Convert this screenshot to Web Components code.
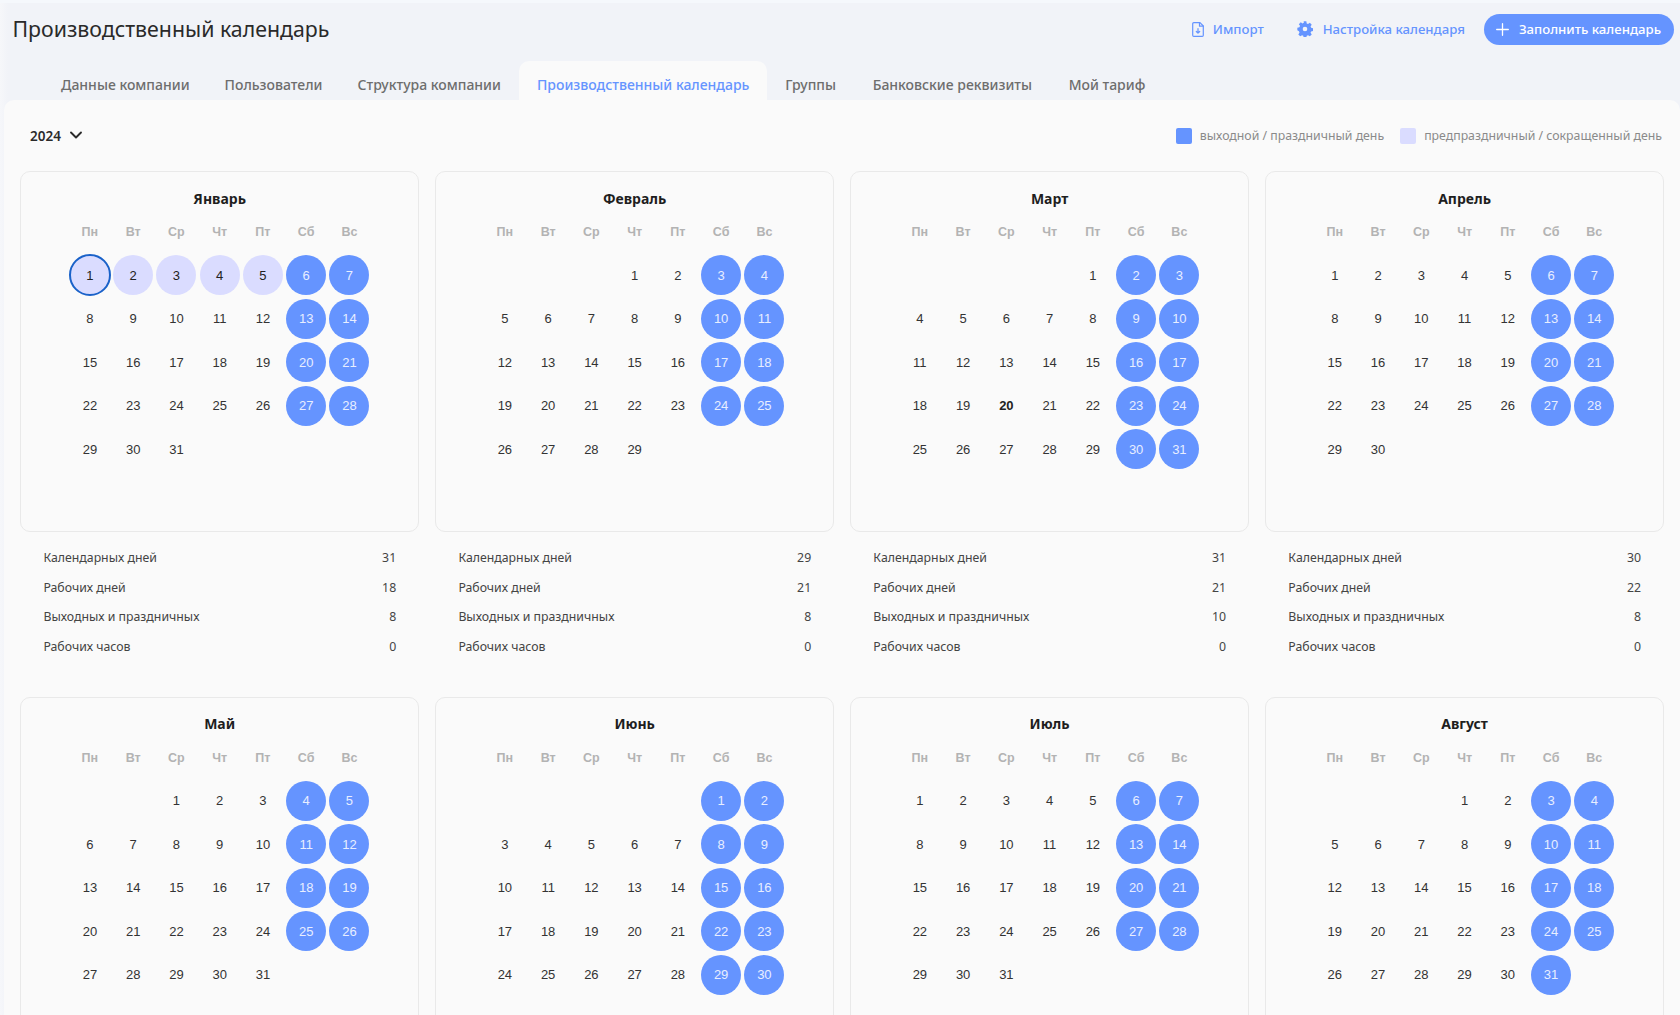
<!DOCTYPE html>
<html lang="ru"><head><meta charset="utf-8"><title>Производственный календарь</title>
<style>html,body{margin:0;padding:0;height:1015px;overflow:hidden;background:#f1f3f8;font-family:"Noto Sans","Liberation Sans",sans-serif}</style></head>
<body><calendar-app></calendar-app>
<script>
const MONTHS=[
 {n:'Январь',o:0,d:31,s:[31,18,8,0],light:[1,2,3,4,5],ring:1},
 {n:'Февраль',o:3,d:29,s:[29,21,8,0]},
 {n:'Март',o:4,d:31,s:[31,21,10,0],bold:20},
 {n:'Апрель',o:0,d:30,s:[30,22,8,0]},
 {n:'Май',o:2,d:31},
 {n:'Июнь',o:5,d:30},
 {n:'Июль',o:0,d:31},
 {n:'Август',o:3,d:31}];
const WD=['Пн','Вт','Ср','Чт','Пт','Сб','Вс'];
const LABELS=['Календарных дней','Рабочих дней','Выходных и праздничных','Рабочих часов'];

class ActionLink extends HTMLElement{constructor(){super();this.attachShadow({mode:'open'}).innerHTML=`<style>
:host{display:inline-flex;align-items:center;gap:var(--g,9px);color:#6594ff;font:500 13.2px "Noto Sans",sans-serif;white-space:nowrap}
::slotted(svg){display:block}</style><slot name="icon"></slot><slot></slot>`}}
customElements.define('action-link',ActionLink);

class FillButton extends HTMLElement{constructor(){super();this.attachShadow({mode:'open'}).innerHTML=`<style>
:host{display:inline-flex;align-items:center;gap:10px;height:31px;padding:0 13px 0 12px;border-radius:16px;background:#6594ff;color:#fff;font:500 13.2px "Noto Sans",sans-serif;white-space:nowrap}
svg{display:block}</style><svg width="13" height="13" viewBox="0 0 13 13"><path d="M6.500 .7v11.600M.7 6.500h11.600" stroke="#fff" stroke-width="1.300" stroke-linecap="round"/></svg><slot></slot>`}}
customElements.define('fill-button',FillButton);

class TopBar extends HTMLElement{constructor(){super();this.attachShadow({mode:'open'}).innerHTML=`<style>
:host{display:flex;align-items:center;height:61px;padding:0 6px 2px 12.500px;box-sizing:border-box;font-family:"Noto Sans",sans-serif;border-top:3px solid #f5f8fc}
h1{margin:0;flex:1;font:400 21.3px "Noto Sans",sans-serif;color:#2a2a2a;position:relative;top:-3px}
.a{display:flex;align-items:center;position:relative;top:-2px}
action-link:nth-child(1){margin-right:33px}
action-link:nth-child(2){margin-right:19px;--g:10px}
</style><h1>Производственный календарь</h1><div class="a">
<action-link><svg slot="icon" width="12" height="15" viewBox="0 0 12 15" fill="none" stroke="#6594ff" stroke-width="1.200" stroke-linejoin="round" stroke-linecap="round"><path d="M.7 1.800C.7 1.200 1.200.7 1.800.7H8l3.300 3.300v9.200c0 .6-.5 1.100-1.100 1.100H1.800c-.6 0-1.100-.5-1.100-1.100z"/><path d="M7.500.7v3.500h3.800M6 6.500v4.500M4.300 9.500L6 11.200l1.700-1.700"/></svg>Импорт</action-link>
<action-link><svg slot="icon" width="16" height="16" viewBox="0 0 24 24" fill="#6594ff"><path fill-rule="evenodd" d="M10 .5h4l.6 3.200c.7.200 1.300.500 1.900.9l2.800-1.800 2.800 2.800-1.800 2.800c.4.600.7 1.200.9 1.900l3.300.7v4l-3.300.6c-.2.600-.5 1.200-.9 1.800l1.800 2.800-2.800 2.800-2.800-1.800c-.6.400-1.200.6-1.900.8l-.6 3.300h-4l-.6-3.300c-.6-.2-1.200-.4-1.800-.8l-2.800 1.800-2.800-2.800 1.800-2.800c-.4-.6-.6-1.200-.8-1.900L.5 14v-4l3.200-.6c.2-.7.500-1.300.9-1.900L2.800 4.700 5.600 1.900l2.800 1.800c.6-.4 1.200-.7 1.900-.9zM12 8.500a3.500 3.500 0 1 0 0 7 3.500 3.500 0 0 0 0-7z"/></svg>Настройка календаря</action-link>
<fill-button>Заполнить календарь</fill-button></div>`}}
customElements.define('top-bar',TopBar);

class TabBar extends HTMLElement{constructor(){super();const t=['Данные компании','Пользователи','Структура компании','Производственный календарь','Группы','Банковские реквизиты','Мой тариф'];
this.attachShadow({mode:'open'}).innerHTML=`<style>
:host{display:flex;height:39px;padding-left:43.500px;font:500 14px "Noto Sans",sans-serif;color:#6d6d6d}
div{display:flex;align-items:center;padding:7px 17.500px 0;white-space:nowrap;box-sizing:border-box}
div:first-child{padding-right:16.700px}
.on{background:#fafafa;color:#6594ff;border-radius:10px 10px 0 0;margin-left:1px}
.on~div{padding-left:18.300px;padding-right:18.300px}
</style>`+t.map((x,i)=>`<div class="${i==3?'on':''}">${x}</div>`).join('')}}
customElements.define('tab-bar',TabBar);

class PanelToolbar extends HTMLElement{constructor(){super();this.attachShadow({mode:'open'}).innerHTML=`<style>
:host{display:flex;align-items:center;justify-content:space-between;height:71px;padding:0 18px 0 26px;box-sizing:border-box;font-family:"Noto Sans",sans-serif}
.y{display:flex;align-items:center;gap:8px;font:600 13.500px "Noto Sans",sans-serif;color:#2a2a2a}
.l{display:flex;align-items:center;font-size:12.300px;color:#8a8a8a}
i{width:16px;height:16px;border-radius:2px;margin-right:8px;background:#6594ff}
i.b{background:#dadcff;margin-left:16px}
</style><div class="y">2024<svg width="14" height="9" viewBox="0 0 14 9" fill="none" stroke="#2a2a2a" stroke-width="1.900" stroke-linecap="round" stroke-linejoin="round"><path d="M2 1.500l5 5 5-5"/></svg></div>
<div class="l"><i></i>выходной / праздничный день<i class="b"></i>предпраздничный / сокращенный день</div>`}}
customElements.define('panel-toolbar',PanelToolbar);

class DayCell extends HTMLElement{constructor(){super();this.attachShadow({mode:'open'}).innerHTML=`<style>
:host{display:flex;align-items:center;justify-content:center;height:43.400px;font:400 13px "Liberation Sans",sans-serif;color:#333}
span{width:40px;height:40px;border-radius:50%;display:flex;align-items:center;justify-content:center;box-sizing:border-box}
:host([kind=off]) span{background:#6594ff;color:#e8eeff}
:host([kind=light]) span{background:#dadcff;color:#222}
:host([ring]) span{border:2px solid #1a62c9;width:42px;height:42px;margin:-1px}
:host([bold]){font-weight:700;color:#222}
</style><span><slot></slot></span>`}}
customElements.define('day-cell',DayCell);

class MonthCard extends HTMLElement{constructor(){super();this.attachShadow({mode:'open'})}
connectedCallback(){const m=MONTHS[+this.getAttribute('index')];let c='';
for(let i=0;i<m.o;i++)c+='<b></b>';
for(let d=1;d<=m.d;d++){const col=(m.o+d-1)%7;let a='';
 if(col>=5)a=' kind="off"';else if(m.light&&m.light.includes(d))a=' kind="light"';
 if(m.ring===d)a+=' ring';if(m.bold===d)a+=' bold';
 c+=`<day-cell${a}>${d}</day-cell>`}
const stats=m.s?`<div class="s">${LABELS.map((l,i)=>`<div><span>${l}</span><span>${m.s[i]}</span></div>`).join('')}</div>`:'';
this.shadowRoot.innerHTML=`<style>
:host{display:block;font-family:"Noto Sans",sans-serif}
.c{height:361px;box-sizing:border-box;border:1.500px solid #e9e9e9;border-radius:10px;padding-top:14.500px;display:flex;flex-direction:column;align-items:center}
h2{margin:0;height:24px;font:700 14px/24px "Noto Sans",sans-serif;color:#1e1e1e}
.w,.g{display:grid;grid-template-columns:repeat(7,43.250px);width:302.750px}
.w{margin-top:9.500px;height:24px;align-items:center;margin-bottom:9.800px}
.w span{text-align:center;font:700 12.500px "Liberation Sans",sans-serif;color:#b3b3b3}
.s{padding:11px 23px 0 23.300px}
.s div{display:flex;justify-content:space-between;height:29.500px;align-items:center;font-size:12.300px;color:#444}
</style><div class="c"><h2>${m.n}</h2><div class="w">${WD.map(x=>`<span>${x}</span>`).join('')}</div><div class="g">${c}</div></div>${stats}`}}
customElements.define('month-card',MonthCard);

class CalendarApp extends HTMLElement{constructor(){super();this.attachShadow({mode:'open'}).innerHTML=`<style>
:host{display:block;height:1015px;overflow:hidden;background:linear-gradient(90deg,#f6f7fa 0,#f1f3f8 8px)}
.p{margin-left:4px;height:915px;background:#fafafa;border-radius:10px 10px 0 0;overflow:hidden}
.g{display:grid;grid-template-columns:repeat(4,399.100px);column-gap:15.900px;padding-left:16.100px}
month-card{height:525.500px}
</style><top-bar></top-bar><tab-bar></tab-bar><div class="p"><panel-toolbar></panel-toolbar><div class="g">${MONTHS.map((_,i)=>`<month-card index="${i}"></month-card>`).join('')}</div></div>`}}
customElements.define('calendar-app',CalendarApp);
</script></body></html>
